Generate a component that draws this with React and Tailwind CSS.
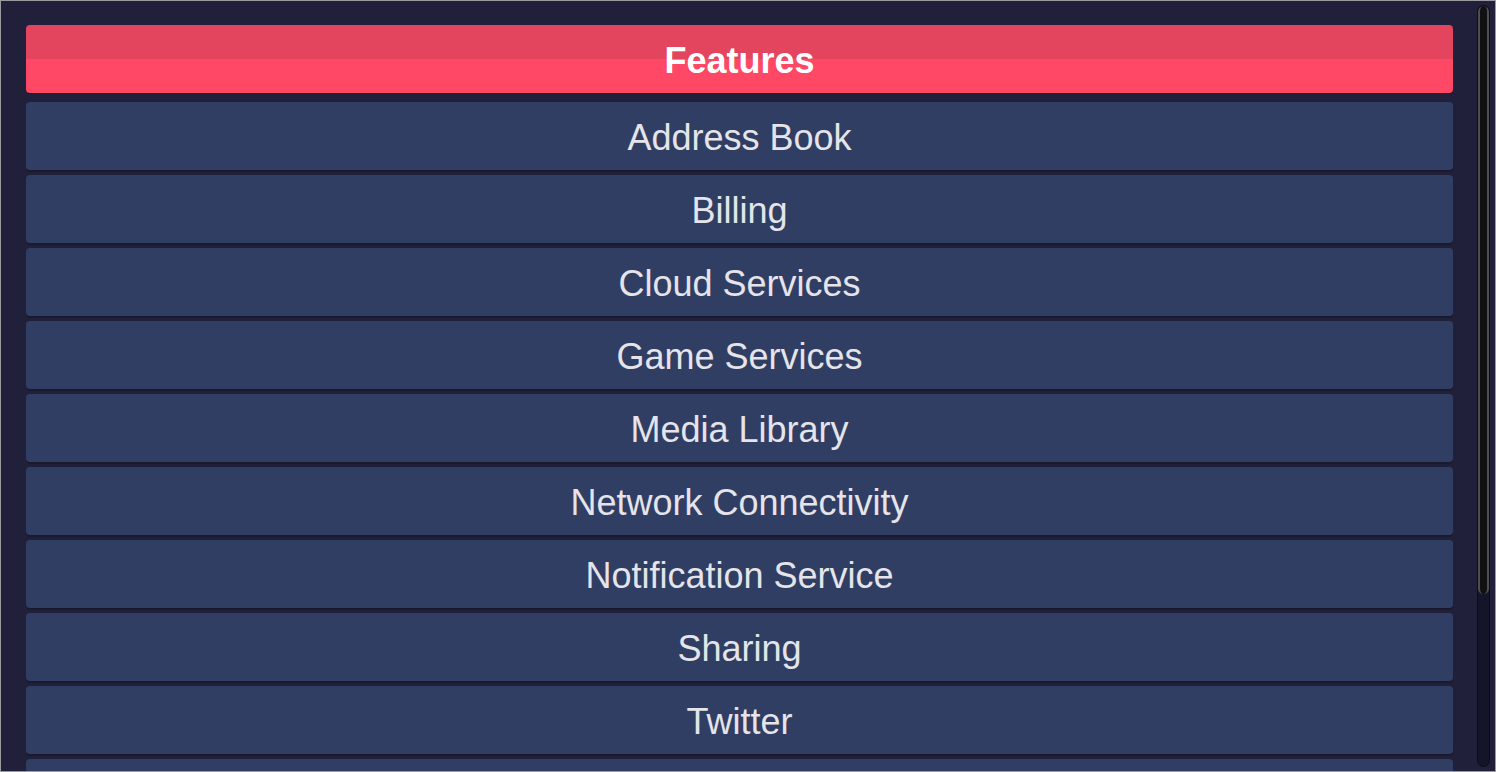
import React from "react";

const items = [
  "Address Book",
  "Billing",
  "Cloud Services",
  "Game Services",
  "Media Library",
  "Network Connectivity",
  "Notification Service",
  "Sharing",
  "Twitter",
];

export default function App() {
  return (
    <div
      className="w-[1496px] h-[772px] border border-[#9a9a9f] bg-[#20203a] overflow-hidden flex"
      style={{ fontFamily: '"Liberation Sans", Arial, sans-serif' }}
    >
      <div className="pl-[25px] pt-[24px] w-[1452px] shrink-0 flex flex-col">
        <div className="h-[68px] rounded-[4px] overflow-hidden relative shadow-[0_1px_0_#161628] flex flex-col shrink-0">
          <div className="h-[34px] bg-[#e3455e]" />
          <div className="flex-1 bg-[#ff4866]" />
          <div className="absolute inset-0 flex items-center justify-center text-white font-bold text-[36px] pt-[4px]">
            Features
          </div>
        </div>
        <div className="flex flex-col gap-[5px] mt-[9px]">
          {items.map((t) => (
            <div
              key={t}
              className="h-[68px] shrink-0 rounded-[4px] bg-[#313e63] shadow-[0_2px_0_#1a1a2e] flex items-center justify-center text-[#e4e4ea] text-[36px] pt-[4px]"
            >
              {t}
            </div>
          ))}
          <div className="h-[68px] shrink-0 rounded-[4px] bg-[#313e63] shadow-[0_2px_0_#1a1a2e]" />
        </div>
      </div>
      <div className="ml-[24px] mt-[4px] w-[13px] h-[762px] rounded-full bg-[#15152a] border border-[#0c0c18] relative shrink-0 overflow-hidden">
        <div className="h-[588px] rounded-full bg-[#111] border-l-2 border-r-2 border-[#4f4f4f]" />
      </div>
    </div>
  );
}
